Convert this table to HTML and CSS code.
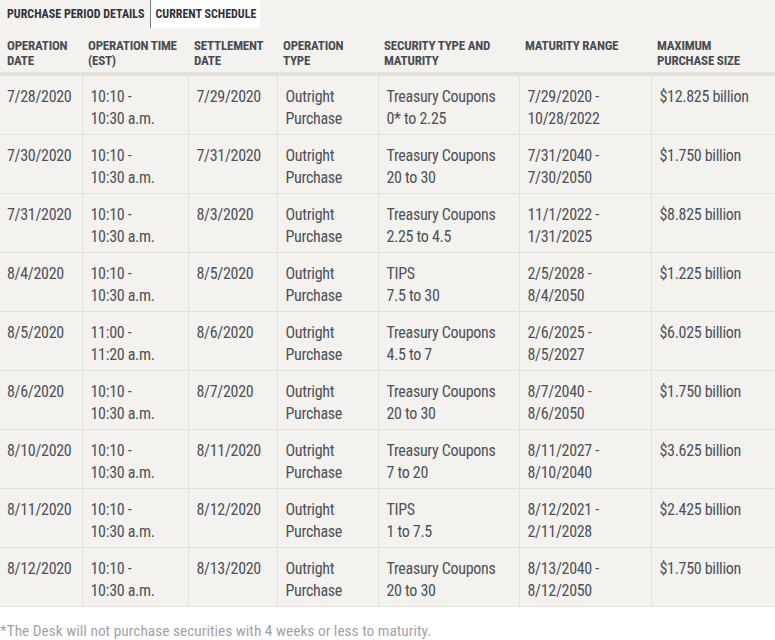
FILE: index.html
```html
<!DOCTYPE html>
<html>
<head>
<meta charset="utf-8">
<link rel="stylesheet" href="styles.css">
</head>
<body>
<div class="tabs">
  <div class="tab">PURCHASE PERIOD DETAILS</div>
  <div class="tab tab-active">CURRENT SCHEDULE</div>
</div>
<table class="schedule">
  <colgroup>
    <col class="c1"><col class="c2"><col class="c3"><col class="c4"><col class="c5"><col class="c6"><col class="c7">
  </colgroup>
  <thead>
    <tr>
      <th>OPERATION<br>DATE</th>
      <th>OPERATION TIME<br>(EST)</th>
      <th>SETTLEMENT<br>DATE</th>
      <th>OPERATION<br>TYPE</th>
      <th>SECURITY TYPE AND<br>MATURITY</th>
      <th>MATURITY RANGE</th>
      <th>MAXIMUM<br>PURCHASE SIZE</th>
    </tr>
  </thead>
  <tbody>
    <tr><td>7/28/2020</td><td>10:10 -<br>10:30 a.m.</td><td>7/29/2020</td><td>Outright<br>Purchase</td><td>Treasury Coupons<br>0* to 2.25</td><td>7/29/2020 -<br>10/28/2022</td><td>$12.825 billion</td></tr>
    <tr><td>7/30/2020</td><td>10:10 -<br>10:30 a.m.</td><td>7/31/2020</td><td>Outright<br>Purchase</td><td>Treasury Coupons<br>20 to 30</td><td>7/31/2040 -<br>7/30/2050</td><td>$1.750 billion</td></tr>
    <tr><td>7/31/2020</td><td>10:10 -<br>10:30 a.m.</td><td>8/3/2020</td><td>Outright<br>Purchase</td><td>Treasury Coupons<br>2.25 to 4.5</td><td>11/1/2022 -<br>1/31/2025</td><td>$8.825 billion</td></tr>
    <tr><td>8/4/2020</td><td>10:10 -<br>10:30 a.m.</td><td>8/5/2020</td><td>Outright<br>Purchase</td><td>TIPS<br>7.5 to 30</td><td>2/5/2028 -<br>8/4/2050</td><td>$1.225 billion</td></tr>
    <tr><td>8/5/2020</td><td>11:00 -<br>11:20 a.m.</td><td>8/6/2020</td><td>Outright<br>Purchase</td><td>Treasury Coupons<br>4.5 to 7</td><td>2/6/2025 -<br>8/5/2027</td><td>$6.025 billion</td></tr>
    <tr><td>8/6/2020</td><td>10:10 -<br>10:30 a.m.</td><td>8/7/2020</td><td>Outright<br>Purchase</td><td>Treasury Coupons<br>20 to 30</td><td>8/7/2040 -<br>8/6/2050</td><td>$1.750 billion</td></tr>
    <tr><td>8/10/2020</td><td>10:10 -<br>10:30 a.m.</td><td>8/11/2020</td><td>Outright<br>Purchase</td><td>Treasury Coupons<br>7 to 20</td><td>8/11/2027 -<br>8/10/2040</td><td>$3.625 billion</td></tr>
    <tr><td>8/11/2020</td><td>10:10 -<br>10:30 a.m.</td><td>8/12/2020</td><td>Outright<br>Purchase</td><td>TIPS<br>1 to 7.5</td><td>8/12/2021 -<br>2/11/2028</td><td>$2.425 billion</td></tr>
    <tr><td>8/12/2020</td><td>10:10 -<br>10:30 a.m.</td><td>8/13/2020</td><td>Outright<br>Purchase</td><td>Treasury Coupons<br>20 to 30</td><td>8/13/2040 -<br>8/12/2050</td><td>$1.750 billion</td></tr>
  </tbody>
</table>
<p class="footnote">*The Desk will not purchase securities with 4 weeks or less to maturity.</p>
</body>
</html>
```
FILE: styles.css
```css
html, body {
  margin: 0;
  padding: 0;
  background: #ffffff;
}
body {
  font-family: Roboto, "Liberation Sans", sans-serif;
  font-stretch: 87.5%;
  color: #4c5158;
}
.tabs {
  display: flex;
  align-items: stretch;
  height: 28px;
  background: #f4f2ee;
}
.tab {
  display: flex;
  align-items: center;
  padding: 0 5px 0 7px;
  font-size: 12px;
  font-weight: 700;
  font-stretch: 75%;
  color: #2f3338;
}
.tab-active {
  background: #ffffff;
  padding: 0 4px 0 5px;
  border-left: 1px solid #6f7f8e;
  background-clip: padding-box;
}
.schedule {
  width: 775px;
  border-collapse: collapse;
  table-layout: fixed;
  background: #f4f2ee;
}
.c1 { width: 82px; }
.c2 { width: 106px; }
.c3 { width: 89px; }
.c4 { width: 101px; }
.c5 { width: 141px; }
.c6 { width: 132px; }
.c7 { width: 124px; }
.schedule th {
  text-align: left;
  vertical-align: top;
  font-size: 13px;
  font-weight: 700;
  font-stretch: 75%;
  letter-spacing: -0.2px;
  line-height: 15px;
  color: #474c53;
  padding: 10px 6px 4px 6px;
  border-bottom: 4px solid #e4e1dc;
}
.schedule th:first-child {
  padding-left: 7px;
}
.schedule td {
  vertical-align: top;
  font-size: 16px;
  letter-spacing: -0.3px;
  line-height: 22px;
  padding: 10px 8px 4px 8px;
  border-bottom: 1px solid #e4e1dc;
  border-left: 1px solid #e4e1dc;
}
.schedule td:first-child {
  border-left: none;
  padding-left: 7px;
}
.footnote {
  margin: 13px 0 0 0;
  font-size: 15.4px;
  line-height: 22px;
  color: #a3a3a3;
}
```
